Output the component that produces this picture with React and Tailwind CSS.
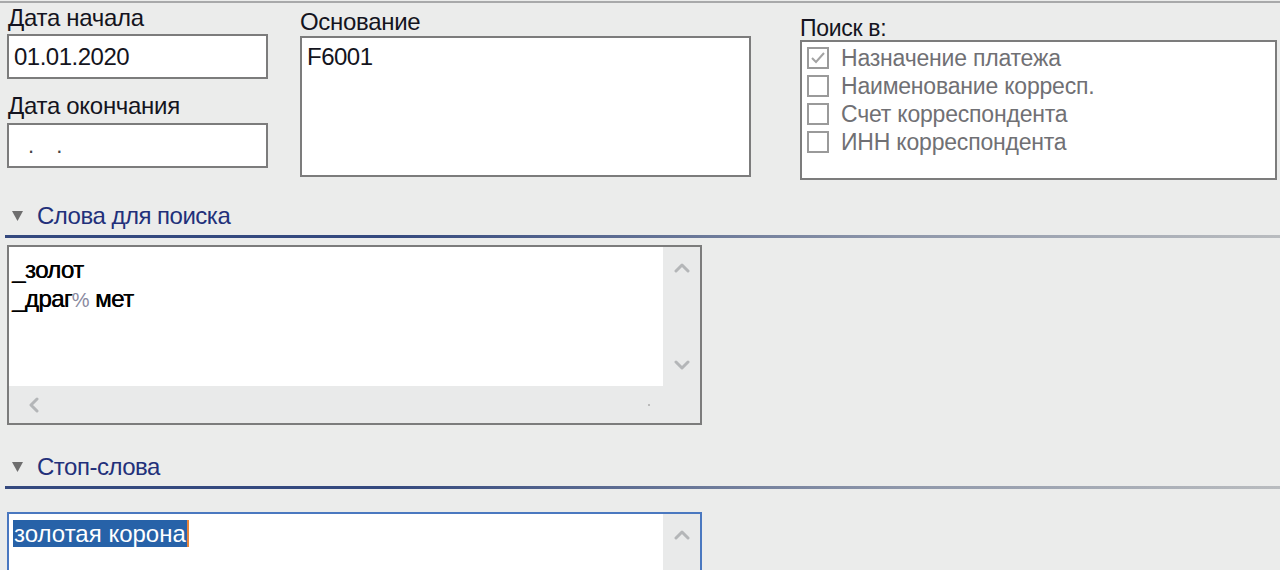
import React from "react";

const font = { fontFamily: '"Liberation Sans", Arial, sans-serif' };

// маленькая стрелка скроллбара
function Chevron({ dir }) {
  const pts = {
    up: "2,10 8,4 14,10",
    down: "2,4 8,10 14,4",
    left: "10,2 4,8 10,14",
  }[dir];
  return (
    <svg width="16" height="16" viewBox="0 0 16 16">
      <polyline points={pts} fill="none" stroke="#b4b6b8" strokeWidth="3" strokeLinecap="round" strokeLinejoin="round" />
    </svg>
  );
}

function Checkbox({ checked, label }) {
  return (
    <div className="flex items-center h-[28px]">
      <div className="w-[22px] h-[22px] border-2 border-[#9a9a9a] bg-white flex items-center justify-center">
        {checked && (
          <svg width="16" height="16" viewBox="0 0 16 16">
            <polyline points="2,8 6,12 14,3" fill="none" stroke="#a3a3a3" strokeWidth="2" />
          </svg>
        )}
      </div>
      <span className="ml-[12px] text-[23px] text-[#707074] leading-none tracking-[-0.2px]">{label}</span>
    </div>
  );
}

function SectionHeader({ title }) {
  return (
    <div>
      <div className="flex items-center pl-[12px] h-[26px]">
        <svg width="11" height="10" viewBox="0 0 11 10">
          <polygon points="0,0 11,0 5.5,10" fill="#6e6e6e" />
        </svg>
        <span className="ml-[14px] text-[24px] text-[#22307a] leading-none tracking-[-0.5px]">{title}</span>
      </div>
      <div className="mt-[6px] ml-[5px] h-[3px] bg-[linear-gradient(to_right,#34497e_0%,#34497e_30%,#8e97aa_70%,#b9bcbf_100%)]" />
    </div>
  );
}

export default function App() {
  return (
    <div className="w-[1280px] h-[570px] overflow-hidden bg-[#ebeceb] text-[#141420]" style={font}>
      <div className="h-[3px] border-t-2 border-[#a8a9aa] mt-px" />

      {/* верхняя часть: даты, основание, поиск в */}
      <div className="flex">
        <div className="pl-[7px] w-[300px]">
          <div className="text-[24px] leading-[26px] pl-px mt-[1px] tracking-[-0.3px]">Дата начала</div>
          <div className="mt-[3px] w-[261px] h-[45px] bg-white border-2 border-[#7c7c7c] flex items-center pl-[5px] text-[24px] tracking-[-0.5px]">
            01.01.2020
          </div>
          <div className="mt-[14px] text-[24px] leading-[26px] pl-px tracking-[-0.3px]">Дата окончания</div>
          <div className="mt-[4px] w-[261px] h-[45px] bg-white border-2 border-[#7c7c7c] flex items-center pl-[19px] text-[22px] tracking-[8px] text-[#444]">
            . .
          </div>
        </div>

        <div className="w-[500px]">
          <div className="text-[24px] leading-[26px] mt-[5px] tracking-[-0.3px]">Основание</div>
          <div className="mt-[1px] w-[451px] h-[141px] bg-white border-2 border-[#7c7c7c] pl-[5px] pt-[6px] text-[24px] leading-[26px] tracking-[-0.5px]">
            F6001
          </div>
        </div>

        <div className="flex-1">
          <div className="text-[23px] leading-[24px] mt-[12px] tracking-[-0.3px]">Поиск в:</div>
          <div className="mt-0 w-[477px] h-[140px] bg-white border-2 border-[#7c7c7c] pl-[5px] pt-[2px]">
            <Checkbox checked label="Назначение платежа" />
            <Checkbox label="Наименование корресп." />
            <Checkbox label="Счет корреспондента" />
            <Checkbox label="ИНН корреспондента" />
          </div>
        </div>
      </div>

      {/* слова для поиска */}
      <div className="mt-[23px]">
        <SectionHeader title="Слова для поиска" />
      </div>
      <div className="mt-[7px] ml-[7px] w-[695px] h-[180px] border-2 border-[#7c7c7c] bg-[#e9eaea] flex flex-col">
        <div className="flex h-[139px]">
          <div className="flex-1 bg-white pl-[3px] pt-[8px] text-[24px] leading-[29px] text-black tracking-[-0.6px] [text-shadow:0.5px_0_0_#000]">
            <div>_золот</div>
            <div>
              _драг<span className="text-[#8a8aa0] text-[20px] [text-shadow:none]">%</span> мет
            </div>
          </div>
          <div className="w-[37px] flex flex-col items-center justify-between pt-[14px] pb-[12px]">
            <Chevron dir="up" />
            <Chevron dir="down" />
          </div>
        </div>
        <div className="flex-1 flex items-center justify-between pl-[18px] pr-[50px]">
          <Chevron dir="left" />
          <div className="w-[2px] h-[2px] bg-[#bbb]" />
        </div>
      </div>

      {/* стоп-слова */}
      <div className="mt-[29px]">
        <SectionHeader title="Стоп-слова" />
      </div>
      <div className="mt-[23px] ml-[7px] w-[695px] h-[80px] border-2 border-[#4a78c0] bg-[#e9eaea] flex">
        <div className="flex-1 bg-white pl-[4px] pt-[6px]">
          <span className="bg-[#2762a8] text-white text-[24px] leading-[27px] px-px border-r-2 border-[#e8843a]">
            золотая корона
          </span>
        </div>
        <div className="w-[37px] flex flex-col items-center pt-[14px]">
          <Chevron dir="up" />
        </div>
      </div>
    </div>
  );
}
